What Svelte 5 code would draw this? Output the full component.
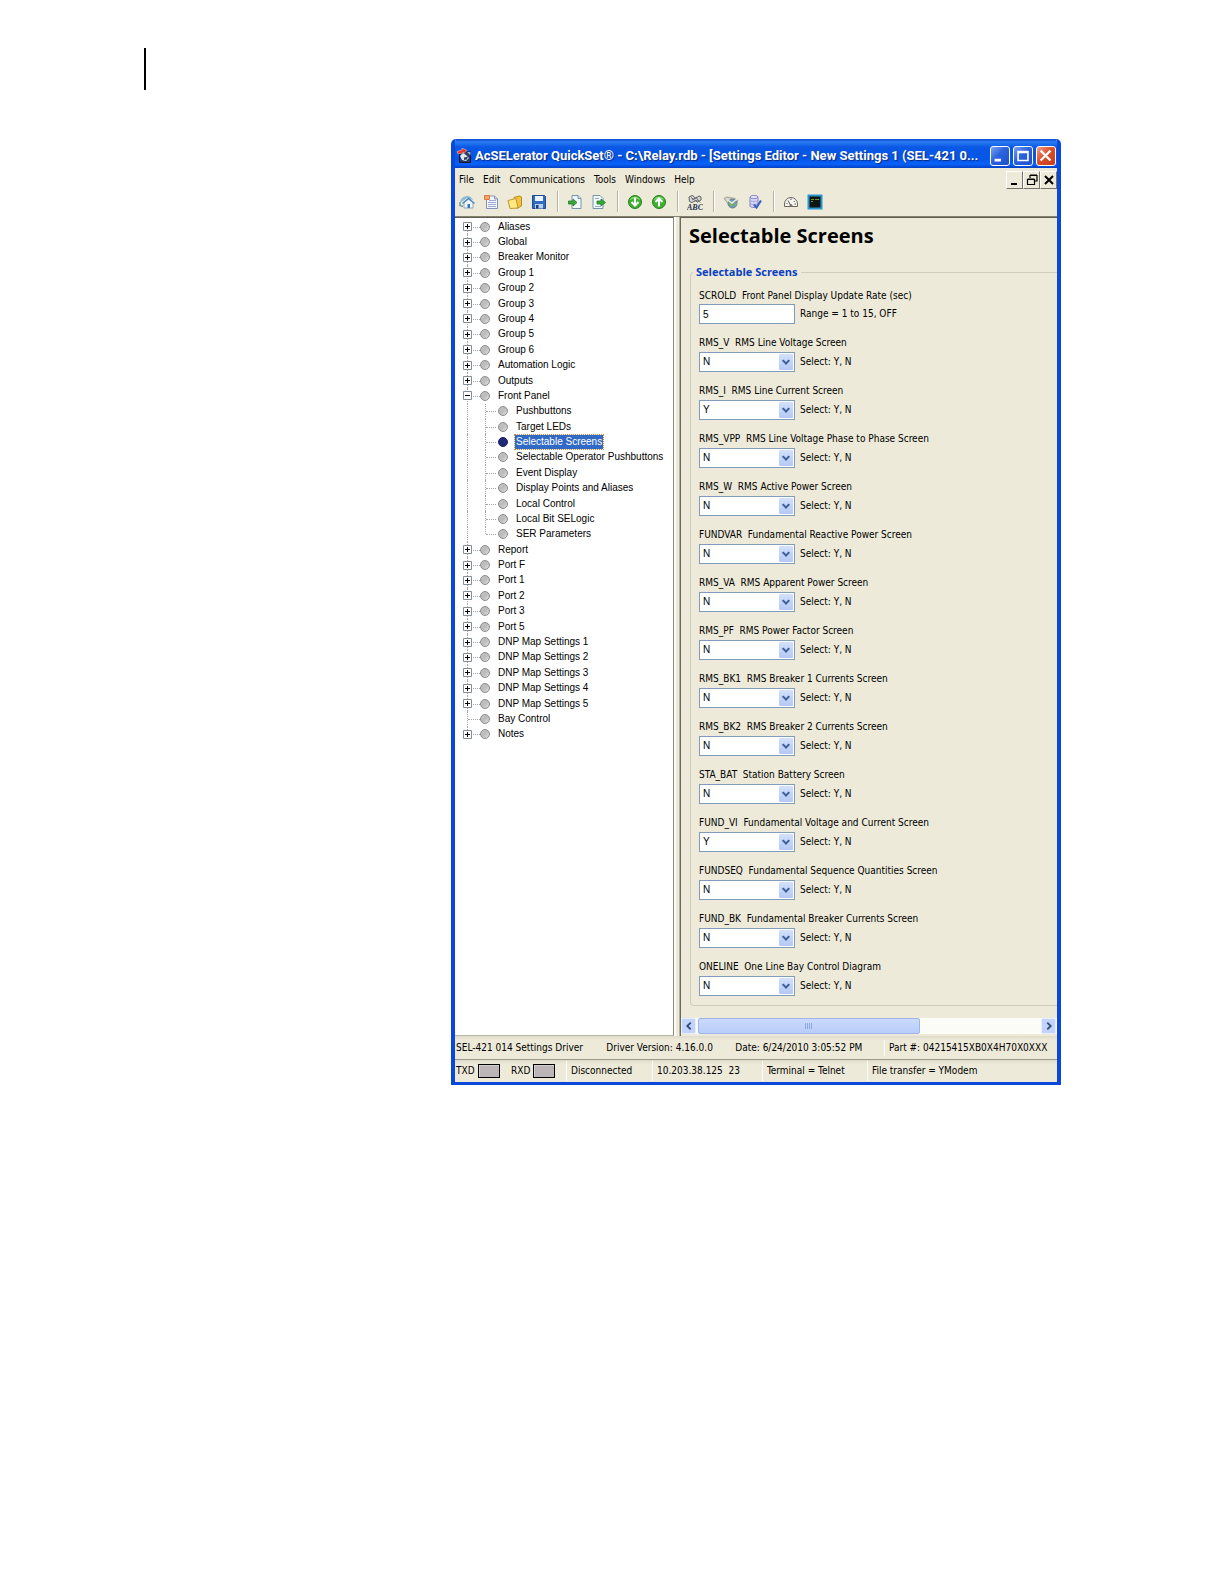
<script>
  const menus = ['File', 'Edit', 'Communications', 'Tools', 'Windows', 'Help'];

  const tools = [
    ['home', 'new', 'open', 'save'],
    ['import', 'export'],
    ['down', 'up'],
    ['abc'],
    ['globe', 'database'],
    ['gauge', 'terminal'],
  ];

  const branch = (label) => ({ label, kind: 'closed' });
  const child = (label) => ({ label, kind: 'child' });

  const tree = [
    ...['Aliases', 'Global', 'Breaker Monitor', 'Group 1', 'Group 2', 'Group 3', 'Group 4',
      'Group 5', 'Group 6', 'Automation Logic', 'Outputs'].map(branch),
    { label: 'Front Panel', kind: 'open' },
    ...['Pushbuttons', 'Target LEDs', 'Selectable Screens', 'Selectable Operator Pushbuttons',
      'Event Display', 'Display Points and Aliases', 'Local Control', 'Local Bit SELogic',
      'SER Parameters'].map(child),
    ...['Report', 'Port F', 'Port 1', 'Port 2', 'Port 3', 'Port 5', 'DNP Map Settings 1',
      'DNP Map Settings 2', 'DNP Map Settings 3', 'DNP Map Settings 4',
      'DNP Map Settings 5'].map(branch),
    { label: 'Bay Control', kind: 'leaf' },
    { label: 'Notes', kind: 'closed' },
  ];

  let selected = $state('Selectable Screens');
  let rate = $state('5');

  let fields = $state([
    { id: 'RMS_V', text: 'RMS Line Voltage Screen', value: 'N' },
    { id: 'RMS_I', text: 'RMS Line Current Screen', value: 'Y' },
    { id: 'RMS_VPP', text: 'RMS Line Voltage Phase to Phase Screen', value: 'N' },
    { id: 'RMS_W', text: 'RMS Active Power Screen', value: 'N' },
    { id: 'FUNDVAR', text: 'Fundamental Reactive Power Screen', value: 'N' },
    { id: 'RMS_VA', text: 'RMS Apparent Power Screen', value: 'N' },
    { id: 'RMS_PF', text: 'RMS Power Factor Screen', value: 'N' },
    { id: 'RMS_BK1', text: 'RMS Breaker 1 Currents Screen', value: 'N' },
    { id: 'RMS_BK2', text: 'RMS Breaker 2 Currents Screen', value: 'N' },
    { id: 'STA_BAT', text: 'Station Battery Screen', value: 'N' },
    { id: 'FUND_VI', text: 'Fundamental Voltage and Current Screen', value: 'Y' },
    { id: 'FUNDSEQ', text: 'Fundamental Sequence Quantities Screen', value: 'N' },
    { id: 'FUND_BK', text: 'Fundamental Breaker Currents Screen', value: 'N' },
    { id: 'ONELINE', text: 'One Line Bay Control Diagram', value: 'N' },
  ]);
</script>

{#snippet icon(name)}
  <svg class="icon" viewBox="0 0 16 16" aria-hidden="true">
    {#if name === 'home'}
      <path d="M1 9Q1 3 8 2Q12 2 14 6L8 4Z" fill="#8dbbd9" />
      <path d="M5 8.500 9.500 5 14 8.500v5.500H5z" fill="#f1f5fb" stroke="#8fa7c2" />
      <path d="M3.500 9.500 9.500 4.500 15.500 9.500" fill="none" stroke="#4d8bbd" stroke-width="1.500" />
      <path d="M8.500 10H11v4H8.500z" fill="#3a78b4" />
      <path d="M1 8v3.500l3 1" fill="none" stroke="#6b9c9b" stroke-width="1.500" />
    {:else if name === 'new'}
      <path d="M3.500 2h8l3 3v9.500h-11z" fill="#f3f6ff" stroke="#8491bb" />
      <path d="M6 6.500h7M5 8.500h8M5 10.500h8M5 12.500h8" stroke="#9fabd1" />
      <path d="M11.500 2v3h3" fill="#c8d2ed" stroke="#8491bb" />
      <path d="M1.500 1.500h5v4h-5z" fill="#f3a56c" stroke="#e07a3c" />
    {:else if name === 'open'}
      <path d="M7 3.500 12 2l2.500 1V12l-4.500 2.500z" fill="#f2c43f" stroke="#b88b1f" />
      <path d="M1 6.500 9 4.500l2 9.500-8 .500z" fill="#ffe984" stroke="#c1962a" />
    {:else if name === 'save'}
      <path d="M1.500 1.500h12l1 1v12h-13z" fill="#2e6dc0" stroke="#1d4a96" />
      <path d="M4 2h8v5H4z" fill="#eef4fd" />
      <path d="M4 10h8v4.500H4z" fill="#b9cce9" />
      <path d="M5 11h2.500v3.500H5z" fill="#1d3d78" />
    {:else if name === 'import'}
      <path d="M5 1.500h6l3 3v10H5z" fill="#f2f7fc" stroke="#7395ac" />
      <path d="M11 1.500v3h3" fill="#cfdeea" stroke="#7395ac" />
      <path d="M1.500 7H6V5l4 3.500L6 12v-2H1.500z" fill="#36a93b" stroke="#217a28" stroke-width=".8" />
    {:else if name === 'export'}
      <path d="M2 1.500h7l3 3v10H2z" fill="#f2f7fc" stroke="#7395ac" />
      <path d="M4 4.500h4M4 12.500h6" stroke="#97adc0" />
      <path d="M6 7h4V5l4.500 3.500L10 12v-2H6z" fill="#36a93b" stroke="#217a28" stroke-width=".8" />
    {:else if name === 'down' || name === 'up'}
      <circle cx="8" cy="8" r="6.500" fill="#3fb031" stroke="#258022" />
      <path d="M3 6a5.500 5.500 0 0 1 10 0Q8 3 3 6" fill="#86d875" />
      {#if name === 'down'}
        <path d="M8 3.500v8M4.500 8 8 11.500 11.500 8" fill="none" stroke="#fff" stroke-width="2" />
      {:else}
        <path d="M8 12.500v-8M4.500 8 8 4.500 11.500 8" fill="none" stroke="#fff" stroke-width="2" />
      {/if}
    {:else if name === 'abc'}
      <path d="M2 3 5 1.500l2 1 1.500 2 3.500-2.500 2 1v3l-2.500 1.500L9 6.500 5 8.500 2.500 7.500z" fill="#d9d9d6" stroke="#5b5e64" />
      <path d="M4 3.500l7 5M5 6l5-3M9.500 4l3.500 4.500" stroke="#6b6e74" />
      <text x="0" y="15.500" font-size="8" font-style="italic" font-weight="700" fill="#26324f">ABC</text>
    {:else if name === 'globe'}
      <path d="M1 4.500 4 3l8 1.500 3 2-4 6-6-3z" fill="#d3d4ca" stroke="#a2a499" />
      <circle cx="9.500" cy="9.500" r="4.500" fill="#6f97bd" stroke="#6b7f8e" />
      <path d="M6.500 8q3-2 4 0t-2 5q-3-2-2-5M11 10l3-1-1 4z" fill="#7bb362" />
      <path d="M4 5.500l5 3.500 5-4" fill="none" stroke="#eceee4" stroke-width="1.500" />
    {:else if name === 'database'}
      <path d="M3 3v9c0 2 8 2 8 0V3" fill="#d5d5f5" stroke="#8584c6" />
      <ellipse cx="7" cy="3" rx="4" ry="1.500" fill="#f0f0ff" stroke="#8584c6" />
      <path d="M3 6c0 2 8 2 8 0M3 9c0 2 8 2 8 0" fill="none" stroke="#a3a2d8" />
      <path d="M7 10.500l2.500 3L14 6.500" fill="none" stroke="#3f62c0" stroke-width="2.200" />
    {:else if name === 'gauge'}
      <path d="M1.500 12.500V10a6.500 6.500 0 0 1 13 0v2.500z" fill="#f7f6f0" stroke="#68665f" />
      <path d="M7.500 11 5 6.500M8 4.500v1.500M11.500 7l-.500 1M3.500 9.500h1M11.500 10H13" fill="none" stroke="#55534d" />
      <circle cx="8" cy="11.500" r="1.500" fill="#77756d" />
    {:else if name === 'terminal'}
      <path d="M1.500 1.500h13v13h-13z" fill="#0e1513" stroke="#2798ce" stroke-width="2" />
      <path d="M4 5.500h3M8 5.500h4M4 7.500h2" stroke="#5d9a3b" />
    {/if}
  </svg>
{/snippet}

{#snippet field(id, text)}
  <label for={id}>{id}{'  '}{text}</label>
{/snippet}

<div class="page">
  <div class="margin-rule"></div>

  <main class="window">
    <header class="titlebar">
      <svg class="app-icon" viewBox="0 0 16 16" aria-hidden="true">
        <path d="M3.500 4h11v10.500h-11z" fill="#2b3a60" stroke="#10183a" />
        <path d="M4 8l3-3 3 2 3 3-3 3-4-1z" fill="#dfe6f1" />
        <path d="M8 9.500l4-1-1 3-3 .500z" fill="#32415f" />
        <path d="M11 4h3.500v3.500z" fill="#8fb1de" />
        <path d="M1 3.500 6 2V0l5 2.500L7.500 6V4.500L2 6z" fill="#e5342b" stroke="#fbd5cc" stroke-width=".5" />
      </svg>
      <h1>AcSELerator QuickSet® - C:\Relay.rdb - [Settings Editor - New Settings 1 (SEL-421 0...</h1>
      <div class="caption-buttons">
        <button aria-label="Minimize">
          <svg viewBox="0 0 20 20"><path d="M4 14.500h7" stroke="#fff" stroke-width="3" /></svg>
        </button>
        <button aria-label="Maximize">
          <svg viewBox="0 0 20 20"><path d="M4.500 5h11v10h-11zM4.500 6h11" fill="none" stroke="#fff" stroke-width="1.800" /></svg>
        </button>
        <button class="close" aria-label="Close">
          <svg viewBox="0 0 20 20"><path d="M4 4l11 11M15 4 4 15" stroke="#fff" stroke-width="2.500" /></svg>
        </button>
      </div>
    </header>

    <nav class="menubar">
      {#each menus as m}<button>{m}</button>{/each}
      <div class="mdi">
        <button aria-label="Minimize document">
          <svg viewBox="0 0 14 14"><path d="M3 11h6" stroke="#000" stroke-width="2" /></svg>
        </button>
        <button aria-label="Restore document">
          <svg viewBox="0 0 14 14"><path d="M5 5V2.500h7V8h-2M5 2h7M2.500 6.500h7v5h-7zM2.500 6h7" fill="none" stroke="#000" stroke-width="1.200" /></svg>
        </button>
        <button aria-label="Close document">
          <svg viewBox="0 0 14 14"><path d="M3 3l8 8M11 3l-8 8" stroke="#000" stroke-width="2" /></svg>
        </button>
      </div>
    </nav>

    <div class="toolbar">
      {#each tools as group}
        <div class="group">
          {#each group as name}<button aria-label={name}>{@render icon(name)}</button>{/each}
        </div>
      {/each}
    </div>

    <div class="body">
      <div class="tree-pane">
        <ul class="tree">
          {#each tree as node, i}
            <li class={node.kind} class:first={i === 0} class:last={i === tree.length - 1}>
              <span class="trunk">
                {#if node.kind === 'closed' || node.kind === 'open'}
                  <button class="toggle" aria-label="Toggle {node.label}">
                    <svg viewBox="0 0 9 9">
                      <path d="M.5 .5h8v8h-8z" fill="#fff" stroke="#848c94" />
                      <path d={node.kind === 'closed' ? 'M2 4.500h5M4.500 2v5' : 'M2 4.500h5'} stroke="#000" />
                    </svg>
                  </button>
                {/if}
              </span>
              {#if node.kind === 'child'}
                <span class="twig" class:end={node.label === 'SER Parameters'}></span>
              {/if}
              <span class="bullet" class:on={selected === node.label}></span>
              <button class="node" class:selected={selected === node.label} onclick={() => (selected = node.label)}>{node.label}</button>
            </li>
          {/each}
        </ul>
      </div>

      <div class="splitter"></div>

      <section class="panel">
        <h2>Selectable Screens</h2>
        <form>
          <fieldset>
            <legend>Selectable Screens</legend>
            <div class="field text">
              {@render field('SCROLD', 'Front Panel Display Update Rate (sec)')}
              <div class="control">
                <input id="SCROLD" type="text" bind:value={rate} />
                <span class="hint">Range = 1 to 15, OFF</span>
              </div>
            </div>
            {#each fields as f}
              <div class="field">
                {@render field(f.id, f.text)}
                <div class="control">
                  <span class="combo">
                    <select id={f.id} bind:value={f.value}>
                      <option>N</option>
                      <option>Y</option>
                    </select>
                    <svg class="drop" viewBox="0 0 14 17" aria-hidden="true">
                      <path d="M3.500 6.500 7 10l3.500-3.500" fill="none" stroke="#3f5f96" stroke-width="2.200" />
                    </svg>
                  </span>
                  <span class="hint">Select: Y, N</span>
                </div>
              </div>
            {/each}
          </fieldset>
        </form>
        <div class="scrollbar">
          <button aria-label="Scroll left">
            <svg viewBox="0 0 14 14"><path d="M9 3 5 7l4 4" fill="none" stroke="#34507f" stroke-width="2.200" /></svg>
          </button>
          <div class="track">
            <div class="thumb"><i></i><i></i><i></i><i></i></div>
          </div>
          <button aria-label="Scroll right">
            <svg viewBox="0 0 14 14"><path d="M5 3l4 4-4 4" fill="none" stroke="#34507f" stroke-width="2.200" /></svg>
          </button>
        </div>
      </section>
    </div>

    <footer>
      <div class="status driver">
        <span>SEL-421 014 Settings Driver</span>
        <span>Driver Version: 4.16.0.0</span>
        <span>Date: 6/24/2010 3:05:52 PM</span>
        <span>Part #: 04215415XB0X4H70X0XXX</span>
      </div>
      <div class="status link">
        <span class="leds">TXD <b class="led"></b></span>
        <span class="leds">RXD <b class="led"></b></span>
        <span class="cell">Disconnected</span>
        <span class="cell">10.203.38.125&nbsp; 23</span>
        <span class="cell">Terminal = Telnet</span>
        <span class="cell">File transfer = YModem</span>
      </div>
    </footer>
  </main>
</div>

<style>
  :global(body) {
    background: #fff;
  }

  .page {
    --face: #edead9;
    --blue: #0a48dc;
    --ui: 'DejaVu Sans Condensed', 'DejaVu Sans', sans-serif;
    display: flex;
    flex-direction: column;
    box-sizing: border-box;
    min-height: 100vh;
    padding-top: 48px;
    font: 10px/16px var(--ui);
    color: #000;
  }

  .page * {
    box-sizing: border-box;
  }

  button {
    border: 0;
    padding: 0;
    background: none;
    font: inherit;
    color: inherit;
  }

  svg {
    display: block;
  }

  .margin-rule {
    width: 2px;
    height: 42px;
    margin-left: 144px;
    background: #000;
  }

  .window {
    margin: 49px 163px 0 451px;
    border: solid var(--blue);
    border-width: 0 4px 3px;
    border-radius: 5px 5px 0 0;
    background: var(--face);
    overflow: hidden;
  }

  /* title bar */
  .titlebar {
    display: flex;
    align-items: center;
    height: 29px;
    margin: 0 -4px;
    padding: 4px 5px 0 5px;
    background: linear-gradient(#0a49c8 0, #2a7df5 3px, #0a58e4 8px, #0456e8 20px, #0a62fa 25px, #0341c4 29px);
    color: #fff;
  }

  .app-icon {
    width: 16px;
    height: 16px;
    margin-right: 3px;
  }

  h1 {
    flex: 1;
    min-width: 0;
    margin: 0;
    overflow: hidden;
    font: 700 13px/18px Roboto, sans-serif;
    text-shadow: 1px 1px 1px #0a2a80;
    white-space: nowrap;
  }

  .caption-buttons {
    display: flex;
    gap: 3px;
  }

  .caption-buttons button {
    width: 20px;
    height: 20px;
    border: 1px solid #fff;
    border-radius: 3px;
    background: linear-gradient(135deg, #7ba3f2, #2a62dd 45%, #1e50c8);
  }

  .caption-buttons .close {
    background: linear-gradient(135deg, #f0a088, #dd4f2b 45%, #c63a18);
  }

  /* menus */
  .menubar {
    display: flex;
    align-items: center;
    gap: 9px;
    height: 23px;
    padding-left: 4px;
  }

  .mdi {
    display: flex;
    margin-left: auto;
  }

  .mdi button {
    display: grid;
    place-items: center;
    width: 17px;
    height: 18px;
    border: 1px solid;
    border-color: #fff #75736a #75736a #fff;
  }

  .mdi svg {
    width: 14px;
    height: 14px;
  }

  .toolbar {
    display: flex;
    height: 25px;
  }

  .group {
    display: flex;
    align-items: center;
    height: 21px;
  }

  .group + .group {
    margin-left: 6px;
    padding-left: 5px;
    border-left: 1px solid #b5b2a2;
    box-shadow: inset 1px 0 #fff;
  }

  .group button {
    width: 24px;
    padding: 0 4px;
  }

  .icon {
    width: 16px;
    height: 16px;
  }

  .icon text {
    font-family: 'Liberation Serif', serif;
  }

  /* body */
  .body {
    display: grid;
    grid-template-columns: 219px 6px 1fr;
    border-top: 1px solid #85836f;
  }

  .tree-pane {
    border-top: 1px solid #5e5d52;
    border-right: 1px solid #8d8b7c;
    border-bottom: 1px solid #b9b6a6;
    background: #fff;
  }

  .splitter {
    border-left: 2px solid #fbfaf4;
    border-right: 1px solid #b5b2a2;
    background: var(--face);
  }

  .tree {
    display: grid;
    grid-auto-rows: 1fr;
    height: 524px;
    margin: 0;
    padding: 1px 0 0 12px;
    list-style: none;
    font-family: 'Liberation Sans', sans-serif;
    line-height: 14px;
  }

  .tree li {
    display: flex;
    align-items: center;
  }

  .trunk {
    position: relative;
    display: flex;
    align-items: center;
    align-self: stretch;
    width: 13px;
  }

  .trunk::before {
    content: '';
    position: absolute;
    inset: 0 auto 0 0;
    border-left: 1px dotted #a5a5a5;
  }

  .trunk::after {
    content: '';
    position: absolute;
    top: 50%;
    left: 1px;
    right: 0;
    border-top: 1px dotted #a5a5a5;
  }

  .first .trunk::before {
    top: 50%;
  }

  .last .trunk::before {
    bottom: 50%;
  }

  .child .trunk::after {
    display: none;
  }

  .toggle {
    position: relative;
    z-index: 1;
    margin-left: -4px;
  }

  .toggle svg {
    width: 9px;
    height: 9px;
  }

  .twig {
    position: relative;
    align-self: stretch;
    width: 13px;
    margin: 0 0 0 5px;
  }

  .twig::before {
    content: '';
    position: absolute;
    inset: 0 auto 0 0;
    border-left: 1px dotted #a5a5a5;
  }

  .twig.end::before {
    bottom: 50%;
  }

  .twig::after {
    content: '';
    position: absolute;
    top: 50%;
    left: 1px;
    right: 2px;
    border-top: 1px dotted #a5a5a5;
  }

  .bullet {
    width: 10px;
    height: 10px;
    border: 1px solid #8a8a8a;
    border-radius: 50%;
    background: linear-gradient(135deg, #c2c2c2, #bcbcbc 50%, #e2e2e2);
  }

  .bullet.on {
    border-color: #1c2458;
    background: #1e2a78;
  }

  .node {
    margin-left: 7px;
    padding: 0 1px;
    white-space: nowrap;
  }

  .node.selected {
    outline: 1px dotted #d08a3c;
    background: #316ac5;
    color: #fff;
  }

  /* settings panel */
  .panel {
    min-width: 0;
    padding-bottom: 2px;
    border-top: 1px solid #5e5d52;
    border-left: 1px solid #6b695d;
  }

  h2 {
    margin: 0;
    padding: 4px 0 0 8px;
    font: 700 20px/28px 'Open Sans', sans-serif;
  }

  form {
    padding: 14px 0 0 9px;
  }

  fieldset {
    min-width: 0;
    margin: 0;
    padding: 7px 0 0 8px;
    border: solid #d0cdbd;
    border-width: 1px 0 1px 1px;
    border-radius: 4px 0 0 4px;
  }

  legend {
    margin-left: -6px;
    padding: 0 3px;
    font: 700 11px/16px 'Open Sans', sans-serif;
    color: #0a3fc4;
  }

  .field {
    display: grid;
    gap: 1px;
    margin-bottom: 10px;
  }

  .field.text {
    gap: 0;
  }

  .field:last-child {
    margin-bottom: 9px;
  }

  label {
    line-height: 17px;
    white-space: pre;
  }

  .control {
    display: flex;
    align-items: center;
    gap: 5px;
    height: 20px;
  }

  input,
  select {
    width: 96px;
    height: 20px;
    margin: 0;
    padding: 0 3px;
    border: 1px solid #7f9db9;
    border-radius: 0;
    background: #fff;
    font: 10px/18px 'Liberation Sans', sans-serif;
    color: #000;
    appearance: none;
  }

  .combo {
    position: relative;
    display: block;
    height: 20px;
  }

  .drop {
    position: absolute;
    top: 2px;
    right: 2px;
    width: 14px;
    height: 16px;
    border-radius: 1px;
    background: linear-gradient(#d3e0fd, #b3c9f6);
    pointer-events: none;
  }

  .scrollbar {
    display: flex;
    gap: 2px;
    margin-top: 12px;
    padding-right: 1px;
    background: #fbfbf8;
  }

  .scrollbar button {
    display: grid;
    place-items: center;
    width: 15px;
    height: 16px;
    border: 1px solid #e6eefe;
    border-radius: 2px;
    background: #c3d3fb;
  }

  .scrollbar button svg {
    width: 12px;
    height: 12px;
  }

  .track {
    flex: 1;
  }

  .thumb {
    display: flex;
    align-items: center;
    justify-content: center;
    gap: 1px;
    width: 65%;
    height: 16px;
    border: 1px solid #9db5ea;
    border-radius: 2px;
    background: linear-gradient(#cbdafd, #b8cdfa);
  }

  .thumb i {
    width: 1px;
    height: 6px;
    background: #8fa9dc;
  }

  /* status bars */
  .status {
    display: flex;
    align-items: center;
    height: 23px;
    padding-left: 1px;
    background: linear-gradient(#dedbca, var(--face) 4px);
    white-space: nowrap;
  }

  .driver {
    display: grid;
    grid-template-columns: 25% 129px 1fr 173px;
  }

  .driver span:nth-child(4) {
    padding-left: 4px;
    border-left: 1px solid #fff;
  }

  .link {
    border-top: 1px solid #9c9a8a;
  }

  .leds {
    display: flex;
    align-items: center;
    gap: 3px;
    width: 55px;
  }

  .led {
    width: 22px;
    height: 14px;
    border: 1px solid #000;
    background: #bcb5b8;
    box-shadow: inset 1px 1px #d5d0d2;
  }

  .cell {
    height: 20px;
    padding-left: 4px;
    border-left: 1px solid #fff;
    line-height: 20px;
  }

  .cell:nth-child(3) {
    width: 86px;
  }

  .cell:nth-child(4) {
    width: 110px;
  }

  .cell:nth-child(5) {
    width: 105px;
  }
</style>
